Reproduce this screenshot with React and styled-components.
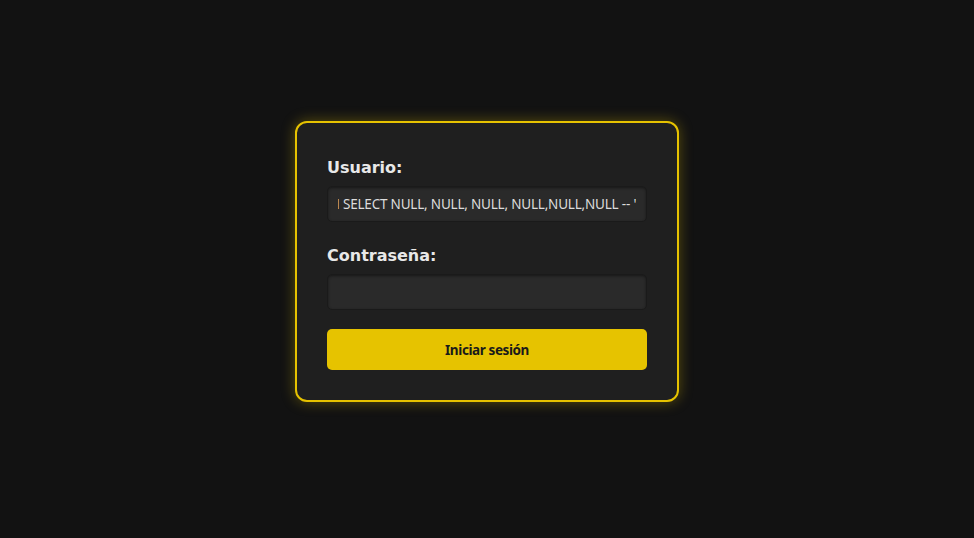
import React, { useEffect, useRef } from 'react';
import styled, { createGlobalStyle } from 'styled-components';

const GlobalStyle = createGlobalStyle`
  html, body {
    margin: 0;
    padding: 0;
    background: #121212;
  }
  body {
    font-family: "DejaVu Sans", Verdana, sans-serif;
  }
`;

const Page = styled.div`
  min-height: 100vh;
  box-sizing: border-box;
  padding-bottom: 15px;
  display: flex;
  align-items: center;
  justify-content: center;
`;

const Card = styled.form`
  width: 320px;
  padding: 35px 30px 30px;
  background: #1f1f1f;
  border: 2px solid #e6c200;
  border-radius: 12px;
  box-shadow: 0 0 14px rgba(230, 194, 0, 0.35);
  display: flex;
  flex-direction: column;
`;

const Label = styled.label`
  color: #e8e8e8;
  font-size: 16px;
  font-weight: bold;
  margin-bottom: 9px;
`;

const Input = styled.input`
  box-sizing: border-box;
  width: 100%;
  height: 36px;
  margin-bottom: ${(p) => p.$gap}px;
  padding: 0 10px;
  background: #2a2a2a;
  border: 1px solid #1a1a1a;
  border-radius: 5px;
  box-shadow: inset 0 1px 3px rgba(0, 0, 0, 0.45);
  color: #dcdcdc;
  font-family: "Noto Sans", "Open Sans", sans-serif;
  font-size: 13.5px;
  letter-spacing: -0.2px;
  outline: none;
`;

const Button = styled.button`
  height: 41px;
  border: none;
  border-radius: 5px;
  background: #e6c300;
  color: #1a1a1a;
  font-family: "Noto Sans", "Open Sans", sans-serif;
  font-size: 13.5px;
  letter-spacing: -0.4px;
  font-weight: bold;
  cursor: pointer;
`;

export default function App() {
  const userRef = useRef(null);

  useEffect(() => {
    const el = userRef.current;
    if (el) el.scrollLeft = el.scrollWidth;
  }, []);

  return (
    <>
      <GlobalStyle />
      <Page>
        <Card onSubmit={(e) => e.preventDefault()}>
          <Label htmlFor="usuario">Usuario:</Label>
          <Input
            id="usuario"
            ref={userRef}
            $gap={24}
            defaultValue="' UNION SELECT NULL, NULL, NULL, NULL,NULL,NULL -- '"
          />
          <Label htmlFor="clave">Contraseña:</Label>
          <Input id="clave" type="password" $gap={19} />
          <Button type="submit">Iniciar sesión</Button>
        </Card>
      </Page>
    </>
  );
}
